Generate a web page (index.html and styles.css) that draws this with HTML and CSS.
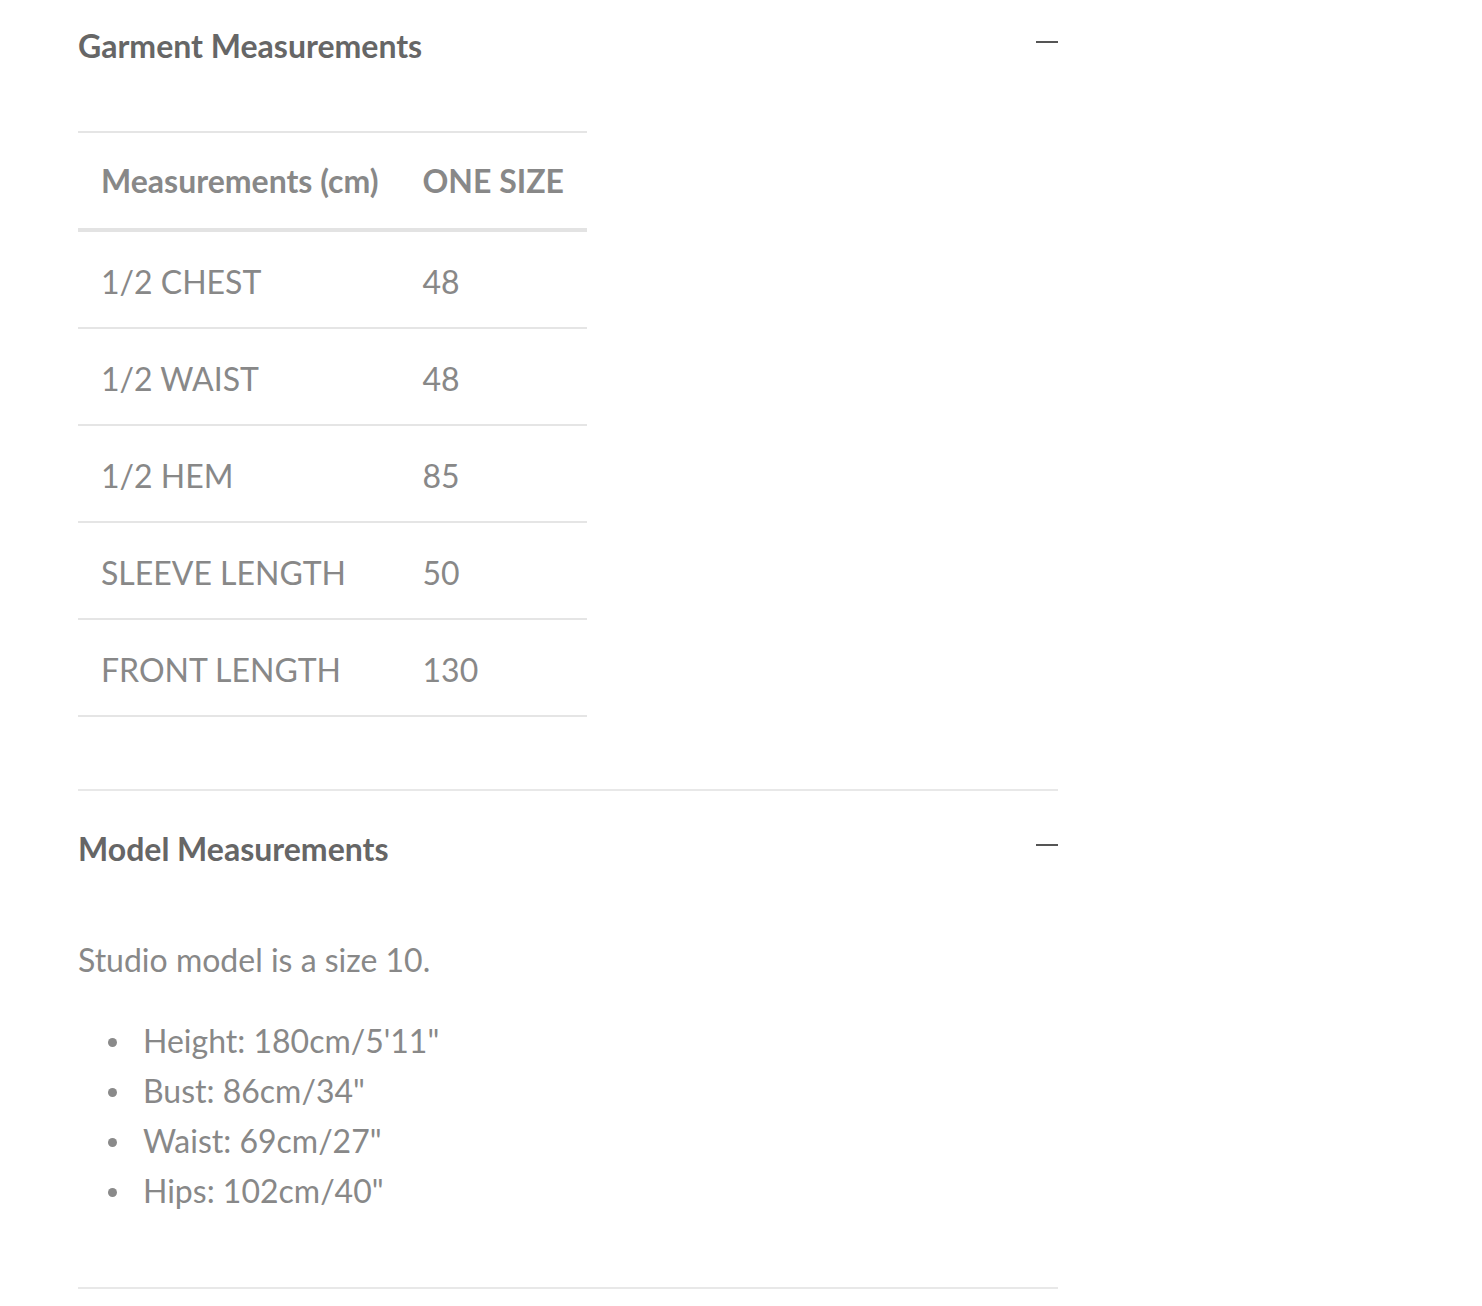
FILE: index.html
```html
<!DOCTYPE html>
<html lang="en">
<head>
<meta charset="utf-8">
<title>Size Guide</title>
<link rel="stylesheet" href="styles.css">
</head>
<body>
<div class="accordion">
  <section class="item item-first">
    <div class="item-header">
      <h2 class="item-title">Garment Measurements</h2>
      <span class="minus"></span>
    </div>
    <div class="item-body">
      <table class="size-table">
        <thead>
          <tr><th>Measurements (cm)</th><th>ONE SIZE</th></tr>
        </thead>
        <tbody>
          <tr><td>1/2 CHEST</td><td>48</td></tr>
          <tr><td>1/2 WAIST</td><td>48</td></tr>
          <tr><td>1/2 HEM</td><td>85</td></tr>
          <tr><td>SLEEVE LENGTH</td><td>50</td></tr>
          <tr><td>FRONT LENGTH</td><td>130</td></tr>
        </tbody>
      </table>
    </div>
  </section>
  <section class="item">
    <div class="item-header">
      <h2 class="item-title">Model Measurements</h2>
      <span class="minus"></span>
    </div>
    <div class="item-body model-body">
      <p class="model-text">Studio model is a size 10.</p>
      <ul class="model-list">
        <li>Height: 180cm/5'11"</li>
        <li>Bust: 86cm/34"</li>
        <li>Waist: 69cm/27"</li>
        <li>Hips: 102cm/40"</li>
      </ul>
    </div>
  </section>
</div>
</body>
</html>
```
FILE: styles.css
```css
html, body {
  margin: 0;
  padding: 0;
  background: #ffffff;
}

body {
  font-family: Lato, "Open Sans", "Liberation Sans", sans-serif;
  color: #888888;
}

.accordion {
  width: 980px;
  margin-left: 78px;
}

.item {
  border-bottom: 2px solid #e8e8e8;
  padding-top: 40px;
  padding-bottom: 71px;
}

.item-first {
  padding-top: 28px;
  padding-bottom: 72px;
}

.item-header {
  display: flex;
  justify-content: space-between;
  align-items: center;
  height: 36px;
}

.item-title {
  margin: 0;
  font-size: 32px;
  line-height: 36px;
  font-weight: 700;
  color: #666666;
}

.minus {
  display: block;
  width: 22px;
  height: 2px;
  background: #555555;
  margin-top: -8px;
}

.item-body {
  padding-top: 67px;
}

.size-table {
  border-collapse: collapse;
  border-top: 2px solid #e5e5e5;
}

.size-table th,
.size-table td {
  padding: 0 23px 0 22px;
  height: 95px;
  text-align: left;
  vertical-align: middle;
  font-size: 32px;
  white-space: nowrap;
  color: #888888;
}

.size-table th:first-child,
.size-table td:first-child {
  padding-left: 23px;
  padding-right: 22px;
}

.size-table th {
  font-weight: 700;
  border-bottom: 4px solid #e3e3e3;
}

.size-table td {
  font-weight: 400;
  border-bottom: 2px solid #e5e5e5;
  padding-top: 3px;
  height: 92px;
}

.model-body {
  padding-top: 70px;
}

.model-text {
  margin: 0;
  font-size: 32px;
  line-height: 45px;
}

.model-list {
  margin: 34px 0 0 0;
  padding-left: 65px;
  font-size: 32px;
  line-height: 50px;
  list-style: none;
}

.model-list li {
  position: relative;
}

.model-list li::before {
  content: "";
  position: absolute;
  left: -35px;
  top: 22px;
  width: 9px;
  height: 9px;
  border-radius: 50%;
  background: #8a8a8a;
}
```
